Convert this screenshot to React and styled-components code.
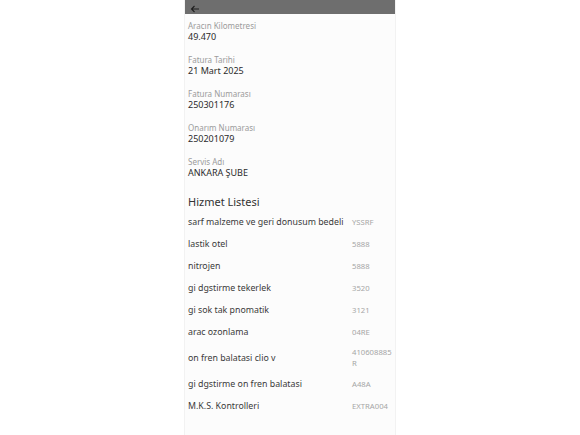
import React from "react";
import styled, { createGlobalStyle } from "styled-components";

const Global = createGlobalStyle`
  html, body { margin: 0; padding: 0; background: #ffffff; }
  body { font-family: "Noto Sans", "Open Sans", sans-serif; }
`;

const Page = styled.div`
  display: flex;
  justify-content: center;
  min-height: 435px;
`;

const Panel = styled.div`
  width: 212px;
  background: #fcfcfc;
  border-left: 1px solid #f2f2f2;
  border-right: 1px solid #f2f2f2;
  box-sizing: border-box;
  display: flex;
  flex-direction: column;
`;

const TopBar = styled.div`
  height: 14px;
  background: #6e6e6e;
  display: flex;
  align-items: flex-end;
  padding: 0 0 1px 5px;
  box-sizing: border-box;
`;

const Body = styled.div`
  padding: 7px 1px 0 3px;
  display: flex;
  flex-direction: column;
`;

const Field = styled.div`
  display: flex;
  flex-direction: column;
  margin-bottom: 13px;
`;

const Label = styled.div`
  font-size: 8px;
  line-height: 10px;
  color: #9b9b9b;
`;

const Value = styled.div`
  font-size: 9px;
  line-height: 11px;
  color: #2b2b2b;
`;

const Title = styled.div`
  font-size: 11px;
  line-height: 14px;
  color: #333;
  margin: 4px 0 2px;
`;

const Row = styled.div`
  display: grid;
  grid-template-columns: 1fr 42px;
  column-gap: 7px;
  align-items: center;
  min-height: ${(p) => (p.tall ? "30px" : "22px")};
`;

const Name = styled.div`
  font-size: 8.8px;
  line-height: 11px;
  color: #3a3a3a;
  white-space: nowrap;
`;

const Code = styled.div`
  font-size: 7.7px;
  line-height: 11px;
  color: #a6a6a6;
  word-break: break-all;
`;

const fields = [
  ["Aracın Kilometresi", "49.470"],
  ["Fatura Tarihi", "21 Mart 2025"],
  ["Fatura Numarası", "250301176"],
  ["Onarım Numarası", "250201079"],
  ["Servis Adı", "ANKARA ŞUBE"],
];

const services = [
  ["sarf malzeme ve geri donusum bedeli", "YSSRF"],
  ["lastik otel", "5888"],
  ["nitrojen", "5888"],
  ["gi dgstirme tekerlek", "3520"],
  ["gi sok tak pnomatik", "3121"],
  ["arac ozonlama", "04RE"],
  ["on fren balatasi clio v", "410608885R"],
  ["gi dgstirme on fren balatasi", "A48A"],
  ["M.K.S. Kontrolleri", "EXTRA004"],
];

function BackArrow() {
  return (
    <svg width="10" height="8" viewBox="0 0 10 8" fill="none">
      <path d="M9 4H1.5M4.5 1L1.5 4l3 3" stroke="#1e1e1e" strokeWidth="1.1" />
    </svg>
  );
}

export default function App() {
  return (
    <Page>
      <Global />
      <Panel>
        <TopBar>
          <BackArrow />
        </TopBar>
        <Body>
          {fields.map(([l, v]) => (
            <Field key={l}>
              <Label>{l}</Label>
              <Value>{v}</Value>
            </Field>
          ))}
          <Title>Hizmet Listesi</Title>
          {services.map(([n, c]) => (
            <Row key={n} tall={c.length > 9}>
              <Name>{n}</Name>
              <Code>{c}</Code>
            </Row>
          ))}
        </Body>
      </Panel>
    </Page>
  );
}
